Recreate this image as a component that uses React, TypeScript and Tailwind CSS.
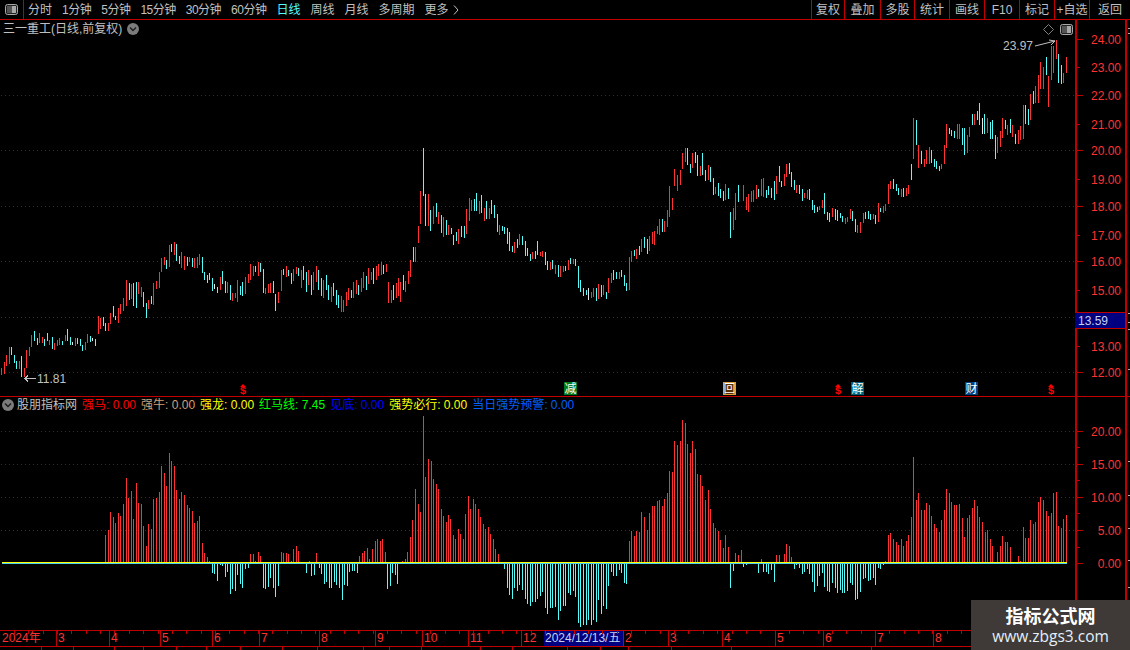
const RED = "#ff3232"
const CYAN = "#54fcfc"
const WHITE = "#e8e8e8"
const colors: Record<string, string> = { r: RED, c: CYAN, w: WHITE }

type Bar = { x: number; top: number; bottom: number; color: string }

// rows are "x:top-bottom+colour", sampled at `scale` times the screen size from (x0, y0)
function parseBars(x0: number, y0: number, raw: string, scale = 3): Bar[] {
  return raw
    .trim()
    .split(/\s+/)
    .map((row) => {
      const m = row.match(/(\d+):(\d+)-(\d+)([rcw])/)!
      return {
        x: x0 + Math.floor(+m[1] / scale),
        top: y0 + Math.round(+m[2] / scale),
        bottom: y0 + Math.round(+m[3] / scale),
        color: colors[m[4]],
      }
    })
}

const candles: Bar[] = [
  ...parseBars(0, 240, `3:385-405r 12:366-402r 18:345-378r 27:321-372r 33:321-345c 42:345-369c 48:363-387c 57:363-387r 63:348-411c 72:384-411r 78:330-384r 87:321-348r 93:285-321r 102:273-303c 111:294-315c 117:279-309r 126:291-309r 132:297-318c 141:279-303c 147:300-315r 156:291-327c 162:309-330r 171:300-318r 177:294-315r 186:303-315c 195:285-303r 201:267-303c 210:291-315c 216:306-315w 225:294-318r 231:294-312c 240:297-318c 246:315-333c 255:306-330r 261:282-309r 270:288-306c 276:294-303w 285:297-318c 294:228-282r 300:234-267r 309:231-258c 315:249-273c 324:249-273r 330:219-252r 339:198-231c 345:228-240c 354:204-249r 360:192-222r 369:174-213r 378:120-198r 387:129-180c 393:132-177r 399:129-198c 408:126-204c 414:126-162r 423:141-171r 429:156-201c 438:189-234c 444:180-207r 453:168-192c 459:129-195r 468:123-147r 477:96-144r 483:54-96r 492:51-75r 498:60-87c 507:15-81r 513:12-36c 522:6-45r 528:12-63c 537:48-72c 543:36-84r 552:48-90r 561:51-78c 567:51-66r 576:54-81c 582:54-84r 591:51-84r 597:42-75r 606:51-99c 612:96-120c 621:105-129c 627:99-120c 636:114-153c 642:132-147w 651:141-159c 660:111-150r 666:93-132c 675:123-159c 681:126-159r 690:135-180c 696:159-183r 705:159-174r 711:120-186r 720:138-165c 726:126-168c 735:111-162r 744:102-129r 750:72-120r 759:78-108r 765:78-96c 774:66-108r 780:69-96c 789:87-159c 795:144-162r 804:132-159r 810:129-159r 819:123-159c 825:162-213c 834:156-189r 843:90-153r 849:87-105c 858:78-111r 864:90-108c 873:99-132c 879:87-123r 888:81-102r 894:84-108c`),
  ...parseBars(0, 0, `301:270-288r 303:266-280c 306:272-292c 308:270-285r 311:275-295c 313:272-290r 316:266-282r 318:270-290c 321:278-296c 323:280-298r 326:275-290c 328:285-300c 331:287-302r 333:283-296c 336:290-305c 338:295-308c 341:296-312r 343:300-312r 346:292-306r 348:288-300r 351:290-298c 353:282-298r 356:280-294r 358:285-295c 361:278-292r 363:272-288r 366:276-290c 368:268-284r 371:272-280r 373:268-284c 376:266-280r 378:264-276r 381:262-275r 383:265-274c 386:264-272r 388:282-303r 391:290-303r 393:285-300c 396:283-298r 398:278-296r`, 1),
  ...parseBars(400, 130, `0:456-516r 9:435-480c 15:453-486r 24:423-462r 30:390-441r 39:351-396c 45:351-396r 54:288-339r 60:183-282r 69:54-198c 75:192-288c 84:192-288r 90:240-303c 99:228-282r 108:219-261c 114:246-282r 123:255-309c 129:261-321r 138:270-315c 144:285-315r 153:294-312c 159:315-345c 168:306-333c 174:297-342r 183:288-321c 192:288-324c 198:237-312r 207:204-273r 213:210-243r 222:207-243c 228:189-243c 237:213-252r 243:195-249c 252:234-273r 258:213-267c 267:234-267r 273:210-252c 282:225-264c 291:252-306c 297:285-315r 306:288-303c 312:291-312c 321:294-342c 327:306-363c 336:348-366c 342:336-369r 351:327-354c 357:312-345r 366:318-345c 375:333-378c 381:354-378c 390:372-393c 396:366-387r 405:363-387c 411:333-375c 420:366-378r 426:363-381r 435:366-405c 441:393-420c 450:396-420r 456:390-417c 465:405-432r 474:405-441c 480:408-441r 489:408-426r 495:408-423c 504:390-420r 510:384-402c 519:387-402r 525:388-408c 534:408-474c 540:450-486c 549:474-498c 558:480-495c 564:474-510w 573:486-504r 579:474-501r 588:474-513c 594:462-507r 603:465-501c 609:465-495r 618:486-507c 624:444-489r 633:429-459r 639:420-450c 648:426-447c 657:426-447r 663:420-441c 672:435-468c 678:459-483c 687:381-480r 693:363-396r 702:360-378c 708:357-387r 717:348-375c 723:327-366r 732:321-354c 741:327-372c 747:318-363r 756:306-342r 762:303-345r 771:288-312r 777:267-315r 786:267-306c 792:273-306r 801:240-291r 807:168-261r 816:204-240r 822:117-168r 831:135-183r 840:120-165r 846:69-117r 855:54-96r 861:54-105c 870:102-129c 876:69-114r 885:66-99c 891:75-138c`),
  ...parseBars(690, 30, `30:408-438r 37:369-435c 45:420-453c 54:405-450r 60:411-456c 69:444-495c 75:471-492r 84:459-498c 90:477-504c 99:483-513c 105:462-510r 114:474-507c 122:546-624c 130:534-600r 136:489-570r 145:465-516c 159:465-513r 169:501-540r 175:492-546r 184:483-516r 190:480-516r 199:465-507r 205:477-501c 213:447-498r 219:444-501r 228:480-504c 234:468-495c 243:474-504c 252:453-510c 258:438-492r 267:408-456c 273:453-471c 282:432-468r 288:402-441r 297:399-432c 303:426-471c 312:450-480c 318:465-489r 327:465-492c 336:477-513c 342:489-504r 351:480-507r 357:477-510c 366:510-540c 372:525-549c 381:531-546c 387:528-540r 396:510-534r 402:489-552c 411:546-570c 417:549-576c 426:534-561r 435:537-570c 441:540-573c 450:549-564c 456:558-576c 465:564-582r 471:561-576r 480:537-567r 486:543-573c 495:567-606c 501:585-609r 510:576-609r 519:549-579r 525:546-567c 534:543-567c 540:552-570c 549:552-567r 555:555-582c 564:519-576r 570:534-546c 579:528-549r 585:522-543r 594:462-522r 600:453-477r 609:447-477c 618:462-483c 624:474-495c 633:477-501r 639:474-501c 648:474-498r 654:465-492r 663:402-450c 669:264-387r 678:270-345c 684:345-414r 693:363-402c 702:387-411r 708:360-402r 717:351-402r 723:360-399c 732:387-411c 738:393-417c 747:408-423c 753:402-417r 762:345-402r 768:282-354r 777:294-312c 783:300-318c 792:303-324c 801:282-327r 807:282-327r 816:294-345c 822:294-375c 831:315-369r 837:291-321r 846:252-285c 852:252-285r 861:243-270c 867:219-285c 876:264-312w 882:252-312c 891:264-309r 900:276-327c 906:270-327c 915:315-387c 921:321-369r 930:303-351r 936:264-324r 945:270-297c 951:285-315r 960:267-309c 966:285-321r 975:312-342c 984:300-342r 990:288-330r 999:225-327r 1005:225-282c 1014:237-285c 1020:192-270r 1029:183-222c 1035:168-219r 1044:135-219r 1050:96-177r 1059:111-177r 1068:81-135c 1074:138-231r 1083:48-150r 1089:48-129r 1098:30-87r 1104:72-159c 1113:105-162c 1119:129-159r 1128:81-129r`),
]

// histogram rows are "x:height", sampled at 3x from x0; negative heights hang under the zero line
function parseHist(x0: number, raw: string, scale = 3) {
  return raw
    .trim()
    .split(/\s+/)
    .map((row) => {
      const [x, h] = row.split(":").map(Number)
      return { x: x0 + Math.floor(x / scale), h }
    })
}

const hist = [
  ...parseHist(100, `15:27 24:32 30:50 39:45 45:39 54:49 60:46 69:58 78:84 84:64 93:71 99:43 108:79 114:59 123:58 129:36 138:16 144:38 153:33 159:63 168:64 177:70 183:96 192:89 198:76 207:109 213:101 222:96 228:72 237:63 243:70 252:67 261:57 267:54 276:51 282:39 291:41 297:46 306:19 312:9 321:5 327:1 336:-9 342:-10 351:-17 360:-1 366:-2 375:-13 381:-8 390:-30 396:-25 405:-27 411:-11 420:-20 426:-24 435:-5 444:-4 450:8 459:8 465:1 474:10 480:6 489:-24 495:-25 504:-23 510:-14 519:-24 525:-33 534:-22 543:10 549:9 558:9 564:8 573:1 579:13 588:16 594:11 618:-9 627:1 633:-12 642:-11 648:9 657:-4 663:-10 672:-20 678:-18 687:-24 693:-24 702:-18 708:-21 717:-24 726:-36 732:-21 741:-22 747:-8 756:-7 762:-7 771:-9 777:6 786:9 792:11 801:14 807:3 816:13 825:21 831:23 840:21 846:23 855:10 861:-25 870:-22 876:-9 885:-11 891:-20`),
  ...parseHist(0, `402:1 405:3 407:10 410:25 412:42 415:73 418:58 420:50 423:146 425:85 428:103 431:101 433:83 436:78 438:73 441:53 443:46 446:40 448:47 450:43 453:27 455:23 458:33 460:28 463:23 465:48 468:66 470:53 473:63 475:58 478:53 480:45 483:38 485:33 488:35 490:28 493:23 495:13 498:8`, 1),
  ...parseHist(500, `12:-5 21:-24 27:-31 36:-35 42:-24 51:-27 57:-21 66:-26 75:-35 81:-40 90:-42 96:-38 105:-38 111:-35 120:-32 126:-28 135:-44 141:-50 150:-44 156:-44 165:-43 174:-56 180:-47 189:-42 195:-42 204:-29 210:-31 219:-27 225:-33 234:-59 240:-63 249:-61 258:-61 264:-56 273:-61 279:-56 288:-58 294:-36 303:-50 309:-42 318:-45 324:-22 333:-8 339:-12 348:-12 357:-6 363:-9 372:-19 378:-20 387:21 393:31 402:26 408:31 417:30 423:50 432:45 441:32 447:49 456:56 462:56 471:61 477:62 486:56 492:63 501:69 507:91 516:90 522:121 531:117 540:121 546:142 555:139 561:118 570:109 576:121 585:113 591:88 600:87 606:76 615:62 624:72 630:53 639:39 645:34 654:31 660:22 669:14 675:27 684:15 690:-24 699:-7 705:9 714:7 723:12 729:-3 738:-1 774:-9 783:3 789:-8 798:-8 804:-10 813:-6 822:-18 828:7 837:7 852:8 858:18 867:16 873:5`),
  ...parseHist(790, `13:-5 18:-1 28:-4 37:-10 43:-8 52:-5 58:-10 67:-18 73:-28 82:-22 88:-12 97:-9 103:-23 112:-27 118:-28 127:-19 136:-24 142:-29 151:-26 157:-29 163:-29 172:-27 181:-19 187:-21 196:-36 202:-35 211:-28 220:-15 226:-14 235:-17 241:-16 250:-14 256:-21 265:-4 271:-5 280:-1 286:1 295:27 301:29 310:23 319:20 325:17 334:23 340:16 349:21 355:27 364:45 370:105 379:62 385:69 394:52 403:52 409:59 418:57 424:46 433:38 439:34 448:30 454:42 463:52 469:73 478:69 484:60 493:57 499:57 508:58 517:44 523:25 532:44 538:47 547:54 553:62 562:56 568:45 577:40 586:30 592:32 601:23 607:16 622:10 631:16 637:26 646:20 652:20 661:15 685:6 691:1 700:35 706:24 715:24 721:42 730:38 736:40 745:60 751:65 760:62 769:51 775:46 784:49 790:69 799:70 805:36 814:34 820:43 829:47`),
]

const tabs = ["分时", "1分钟", "5分钟", "15分钟", "30分钟", "60分钟", "日线", "周线", "月线", "多周期"]
const actions = [
  ["复权", 33],
  ["叠加", 36],
  ["多股", 34],
  ["统计", 35],
  ["画线", 35],
  ["F10", 35],
  ["标记", 35],
  ["+自选", 35],
  ["返回", 41],
] as const

const priceTicks = [
  { y: 39, label: "24.00", major: true },
  { y: 67, label: "23.00" },
  { y: 95, label: "22.00", major: true },
  { y: 124, label: "21.00" },
  { y: 150, label: "20.00", major: true },
  { y: 179, label: "19.00" },
  { y: 206, label: "18.00", major: true },
  { y: 235, label: "17.00" },
  { y: 261, label: "16.00", major: true },
  { y: 290, label: "15.00" },
  { y: 346, label: "13.00" },
  { y: 372, label: "12.00", major: true },
]
const subTicks = [
  { y: 431, label: "20.00", major: true },
  { y: 447 },
  { y: 464, label: "15.00", major: true },
  { y: 480 },
  { y: 497, label: "10.00", major: true },
  { y: 513 },
  { y: 530, label: "5.00", major: true },
  { y: 547 },
  { y: 563, label: "0.00", major: true },
]

const legend = [
  ["强马: 0.00", "text-[#ff0000]"],
  ["强牛: 0.00", "text-[#d2a078]"],
  ["强龙: 0.00", "text-[#ffff00]"],
  ["红马线: 7.45", "text-[#00ff00]"],
  ["见底: 0.00", "text-[#0000ff]"],
  ["强势必行: 0.00", "text-[#ffff00]"],
  ["当日强势预警: 0.00", "text-[#0060ff]"],
]

const dateCells = [
  ["2024年", 56],
  ["3", 53],
  ["4", 51],
  ["5", 52],
  ["6", 47],
  ["7", 60],
  ["8", 56],
  ["9", 47],
  ["10", 46],
  ["11", 53],
  ["12", 23],
] as const
const dateCellsAfter = [
  ["2", 45],
  ["3", 54],
  ["4", 53],
  ["5", 48],
  ["6", 52],
  ["7", 58],
  ["8", 142],
] as const
const statusCells = [42, 32, 41, 29, 33, 30, 34, 42, 35, 46, 26, 32, 59, 32, 55, 33, 28, 43, 60, 140]

function PanelIcon() {
  return (
    <svg width="13" height="11" viewBox="0 0 13 11">
      <rect x="0.5" y="0.5" width="12" height="10" rx="2" fill="#222" stroke="#a8a8a8" />
      <rect x="7" y="2" width="4" height="7" fill="#a8a8a8" />
      <rect x="2" y="2" width="5" height="7" fill="#555" />
    </svg>
  )
}

function DropDot() {
  return (
    <svg width="12" height="12" viewBox="0 0 12 12">
      <circle cx="6" cy="6" r="6" fill="#7c7c7c" />
      <path d="M3 4.5 L6 7.5 L9 4.5" fill="none" stroke="#1c1c1c" strokeWidth="1.4" />
    </svg>
  )
}

function Dotted({ y }: { y: number }) {
  return <line x1="1" x2="1075" y1={y + 0.5} y2={y + 0.5} stroke="#a00000" strokeDasharray="1 3" />
}

function DollarMark({ x }: { x: number }) {
  return (
    <div
      className="absolute top-[364px] flex w-[8px] flex-col items-center text-[#ff0000]"
      style={{ left: x }}
    >
      <span className="h-0 w-0 border-x-[3px] border-b-[3px] border-x-transparent border-b-[#ff0000]" />
      <span className="font-['Liberation_Mono',monospace] text-[11px] leading-[9px] font-bold">$</span>
    </div>
  )
}

function SignMark({ x, text, className }: { x: number; text: string; className: string }) {
  return (
    <div
      className={`absolute top-[362px] flex h-[13px] w-[13px] items-center justify-center text-[12px] leading-none text-white ${className}`}
      style={{ left: x }}
    >
      {text}
    </div>
  )
}

function Axis({ ticks, offset }: { ticks: { y: number; label?: string; major?: boolean }[]; offset: number }) {
  return (
    <div className="relative w-[50px] shrink-0 border-l-2 border-[#c00000] text-[12px] text-[#ff3232]">
      {ticks.map((t) => (
        <div key={t.y} className="absolute left-0 w-full" style={{ top: t.y - offset }}>
          <div className={`h-px bg-[#c00000] ${t.major ? "w-[6px]" : "w-[3px]"}`} />
          {t.label && <span className="absolute top-[-6px] right-[4px] leading-[14px]">{t.label}</span>}
        </div>
      ))}
    </div>
  )
}

// narrow strip right of the value axis, only small grey marks in it
function EdgeStrip({ marks }: { marks: number[] }) {
  return (
    <div className="relative w-[5px] shrink-0 border-l-2 border-[#c00000]">
      {marks.map((y) => (
        <div key={y} className="absolute left-[1px] h-px w-[2px] bg-[#b0b0b0]" style={{ top: y }} />
      ))}
    </div>
  )
}

export default function App() {
  return (
    <div className="relative flex h-[650px] w-[1130px] flex-col overflow-hidden bg-black font-['Liberation_Sans','Noto_Sans_CJK_SC',sans-serif] text-[12px] text-[#c0c0c0]">
      {/* Top bar */}
      <div className="flex h-[20px] shrink-0 items-center border-b border-[#c00000]">
        <div className="flex h-full w-[24px] shrink-0 items-center justify-center border-r border-[#c00000]">
          <PanelIcon />
        </div>
        <div className="ml-[4px] flex items-center gap-[10px] leading-none">
          {tabs.map((t) => (
            <span
              key={t}
              className={`${t === "日线" ? "text-[#54fcfc]" : ""} ${t.includes("分钟") ? "tracking-[-0.5px]" : ""}`}
            >
              {t}
            </span>
          ))}
          <span className="flex items-center gap-[4px]">
            更多
            <svg width="6" height="10" viewBox="0 0 6 10">
              <path d="M1 0.5 L5 5 L1 9.5" fill="none" stroke="#c0c0c0" />
            </svg>
          </span>
        </div>
        <div className="ml-auto flex h-full">
          {actions.map(([t, w]) => (
            <div
              key={t}
              className="flex h-full items-center justify-center border-l border-[#c00000] leading-none"
              style={{ width: w }}
            >
              {t}
            </div>
          ))}
        </div>
      </div>

      {/* Price panel */}
      <div className="flex h-[377px] shrink-0 border-b border-[#c00000]">
        <div className="relative w-[1075px] shrink-0">
          <div className="absolute top-[3px] left-[3px] flex items-center gap-[5px] leading-none">
            <span>三一重工(日线,前复权)</span>
            <DropDot />
          </div>
          <svg width="1075" height="376" viewBox="0 20 1075 376" shapeRendering="crispEdges" className="block">
            {[95, 150, 206, 261, 317, 372].map((y) => (
              <Dotted key={y} y={y} />
            ))}
            {candles.map((c, i) => (
              <rect key={i} x={c.x} y={c.top} width="1" height={c.bottom - c.top} fill={c.color} />
            ))}
            <path d="M1035 46 L1055 41 M1049 40 L1055 41 L1051 45" fill="none" stroke="#c0c0c0" shapeRendering="auto" />
            <path d="M36 378.5 L25 378.5 M28 375.5 L25 378.5 L28 381.5" fill="none" stroke="#c0c0c0" />
          </svg>
          <span className="absolute top-[19px] left-[1003px] leading-[14px]">23.97</span>
          <span className="absolute top-[352px] left-[37px] leading-[14px]">11.81</span>
          <svg width="11" height="11" viewBox="0 0 11 11" className="absolute top-[4px] left-[1043px]">
            <path d="M5.5 0.5 L10.5 5.5 L5.5 10.5 L0.5 5.5 Z" fill="none" stroke="#808080" />
          </svg>
          <div className="absolute top-[4px] left-[1060px] flex">
            <PanelIcon />
          </div>
          <DollarMark x={239} />
          <SignMark x={564} text="减" className="bg-[#007a1e]" />
          <SignMark x={723} text="回" className="border border-[#e0a040] bg-[#5a3000]" />
          <DollarMark x={834} />
          <SignMark x={851} text="解" className="bg-[#00607a]" />
          <SignMark x={965} text="财" className="bg-[#004080]" />
          <DollarMark x={1047} />
        </div>
        <div className="relative flex">
          <Axis ticks={priceTicks} offset={20} />
          <div className="absolute top-[292px] left-0 flex h-[17px] w-[50px] items-center border-y border-[#c00000] bg-[#000080] pl-[3px] text-[#c8d0f0]">
            13.59
          </div>
        </div>
        <EdgeStrip marks={[8, 13, 293, 302, 309, 349]} />
      </div>

      {/* Indicator panel */}
      <div className="flex h-[233px] shrink-0">
        <div className="relative w-[1075px] shrink-0">
          <div className="absolute top-[2px] left-[2px] flex items-center leading-none">
            <DropDot />
            <span className="ml-[3px]">股朋指标网</span>
            <div className="ml-[5px] flex gap-[5px]">
              {legend.map(([t, c]) => (
                <span key={t} className={c}>
                  {t}
                </span>
              ))}
            </div>
          </div>
          <svg width="1075" height="233" viewBox="0 397 1075 233" shapeRendering="crispEdges" className="block">
            {[431, 464, 497, 530].map((y) => (
              <Dotted key={y} y={y} />
            ))}
            {hist.map((b, i) =>
              b.h > 0 ? (
                <rect key={i} x={b.x} y={562 - b.h} width="1" height={b.h} fill={RED} />
              ) : (
                <rect key={i} x={b.x} y={564} width="1" height={-b.h} fill={CYAN} />
              ),
            )}
            <rect x="2" y="563" width="1065" height="1" fill="#4ad0f0" />
            <rect x="2" y="562" width="1065" height="1" fill="#ffff00" />
          </svg>
        </div>
        <Axis ticks={subTicks} offset={397} />
        <EdgeStrip marks={[64, 98, 131, 163, 190]} />
      </div>

      {/* Date axis */}
      <div className="relative flex h-[17px] shrink-0 border-y border-[#c00000] text-[12px] leading-[15px] text-[#ff3232]">
        {dateCells.map(([t, w], i) => (
          <div
            key={i}
            className={`shrink-0 ${i ? "border-l border-[#c00000] pl-[1px]" : "pl-[2px]"}`}
            style={{ width: w }}
          >
            {t}
          </div>
        ))}
        <div className="w-[79px] shrink-0 bg-[#000080] pl-[1px] text-[#c8d0f0]">2024/12/13/五</div>
        {dateCellsAfter.map(([t, w], i) => (
          <div key={i} className="shrink-0 border-l border-[#c00000] pl-[1px]" style={{ width: w }}>
            {t}
          </div>
        ))}
        <div className="h-full w-[55px] shrink-0 border-l-2 border-[#c00000]" />
        <svg width="1075" height="3" className="absolute top-0 left-0">
          {Array.from({ length: 75 }, (_, i) => (
            <rect key={i} x={14 + i * 14.35} y="0" width="1" height="3" fill="#c00000" shapeRendering="crispEdges" />
          ))}
        </svg>
      </div>

      {/* Status row, cut off by the window */}
      <div className="flex flex-1 overflow-hidden">
        {statusCells.map((w, i) => (
          <div key={i} className="shrink-0 border-r border-[#c00000]" style={{ width: w }} />
        ))}
      </div>

      {/* Site watermark */}
      <div className="absolute top-[600px] left-[971px] flex h-[50px] w-[159px] flex-col items-center bg-[#3f3a38] pt-[6px] text-white">
        <span className="text-[18px] leading-[22px] font-bold">指标公式网</span>
        <span className="font-['Open_Sans',sans-serif] text-[15.5px] leading-[16px] text-[#e4effa]">www.zbgs3.com</span>
      </div>
    </div>
  )
}
